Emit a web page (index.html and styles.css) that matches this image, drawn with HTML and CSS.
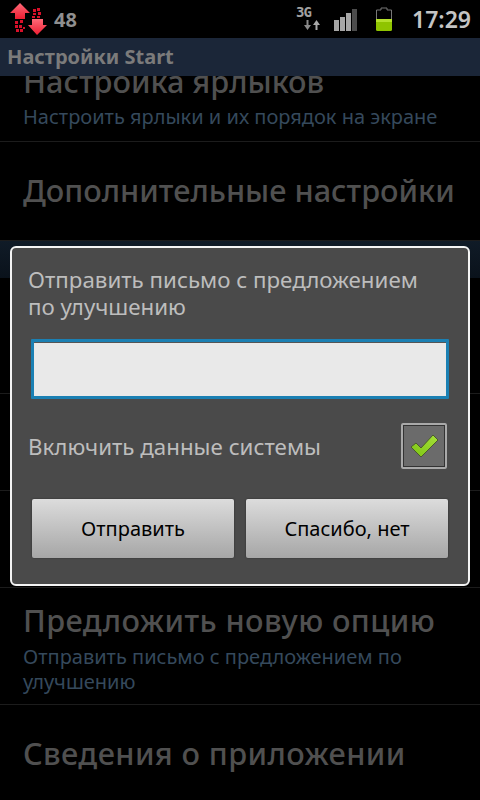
FILE: index.html
```html
<!DOCTYPE html>
<html>
  <head>
    <title>Настройки Start</title>
    <link rel="stylesheet" href="styles.css">
  </head>
  <body>
    <div id="statusBar">
      <svg class="transfer-icon" width="50" height="38" viewBox="0 0 50 38">
        <defs>
          <linearGradient id="arrowFill" x1="0" y1="0" x2="0" y2="1">
            <stop offset="0" stop-color="#ff6a78"/>
            <stop offset="1" stop-color="#ee1c30"/>
          </linearGradient>
        </defs>
        <path d="M20 3 L30 13 H25 V19 H15 V13 H10 Z" fill="url(#arrowFill)"/>
        <path d="M32 19 H43 V25 H47 L37 35 L28 25 H32 Z" fill="url(#arrowFill)"/>
        <path d="M15 21h3v3h-3z M20 20h3v3h-3z M15 25h3v3h-3z M19 25h3v3h-3z M23 27h2v2h-2z M16 29h3v3h-3z M20 29h3v3h-3z" fill="#d8102a"/>
        <path d="M33 9h3v3h-3z M37 8h3v3h-3z M33 13h3v2h-3z M38 12h3v3h-3z M32 16h3v2h-3z M37 16h3v2h-3z" fill="#d8102a"/>
      </svg>
      <span class="notify-count">48</span>
      <div class="status-right">
        <div class="net-icon">
          <span class="net-label">3G</span>
          <svg class="net-arrows" width="18" height="10" viewBox="0 0 18 10">
            <path d="M1 5h2.500V0h2v5H8L4.500 10Z" fill="#8a8a8a"/>
            <path d="M10 5h2.500v5h2V5H17L13.500 0Z" fill="#a8a8a8"/>
          </svg>
        </div>
        <svg class="signal-icon" width="24" height="22" viewBox="0 0 24 22">
          <rect x="0" y="11" width="5" height="11" fill="#a6a6a6"/>
          <rect x="6" y="8" width="5" height="14" fill="#a6a6a6"/>
          <rect x="12" y="4" width="5" height="18" fill="#a6a6a6"/>
          <rect x="18" y="0" width="5" height="22" fill="#4c4c4c"/>
        </svg>
        <svg class="battery-icon" width="18" height="25" viewBox="0 0 18 25">
          <path d="M6 1h6v2h4.500v12h-15v-12h4.500z" fill="none" stroke="#777" stroke-width="1"/>
          <rect x="1" y="12" width="16" height="12" rx="1.500" fill="#8fc400"/>
          <rect x="1" y="12" width="16" height="3" fill="#b4e02c"/>
        </svg>
        <span class="clock">17:29</span>
      </div>
    </div>

    <div id="titleBar">Настройки Start</div>

    <div id="prefList">
      <div class="pref first">
        <div class="pref-title">Настройка ярлыков</div>
        <div class="pref-summary">Настроить ярлыки и их порядок на экране</div>
      </div>
      <div class="pref single">
        <div class="pref-title">Дополнительные настройки</div>
      </div>
      <div class="category"></div>
      <div class="pref blank row-tall"></div>
      <div class="pref blank row-mid"></div>
      <div class="pref blank row-mid"></div>
      <div class="pref two-line">
        <div class="pref-title loose">Предложить новую опцию</div>
        <div class="pref-summary">Отправить письмо с предложением по улучшению</div>
      </div>
      <div class="pref single">
        <div class="pref-title loose">Сведения о приложении</div>
      </div>
    </div>

    <div id="dialog">
      <div class="dialog-message">Отправить письмо с предложением по улучшению</div>
      <input class="dialog-input" type="text">
      <div class="dialog-option">
        <span>Включить данные системы</span>
        <div class="checkbox">
          <svg width="32" height="28" viewBox="0 0 32 28">
            <defs>
              <linearGradient id="checkFill" x1="1" y1="0" x2="0" y2="1">
                <stop offset="0" stop-color="#a6e03a"/>
                <stop offset="1" stop-color="#7cc412"/>
              </linearGradient>
            </defs>
            <path d="M3 15 L8 11 L13 16 L25 3 L30 8 L13 25 Z" fill="url(#checkFill)" stroke="#4a5a2c" stroke-width="1"/>
          </svg>
        </div>
      </div>
      <div class="dialog-buttons">
        <button class="dialog-btn">Отправить</button>
        <button class="dialog-btn">Спасибо, нет</button>
      </div>
    </div>
  </body>
</html>
```

FILE: styles.css
```css
body {
  margin: 0;
  width: 480px;
  height: 800px;
  overflow: hidden;
  display: flex;
  flex-direction: column;
  background: #000;
  font-family: "Noto Sans", "Open Sans", sans-serif;
}

#statusBar {
  height: 38px;
  flex: none;
  display: flex;
  align-items: center;
  background: #000;
  color: #a8a8a8;
}

.transfer-icon {
  flex: none;
}

.notify-count {
  margin-left: 4px;
  font-size: 20px;
  font-weight: 700;
  color: #8f8f8f;
}

.status-right {
  margin-left: auto;
  display: flex;
  align-items: center;
}

.net-icon {
  display: flex;
  flex-direction: column;
  align-items: flex-start;
  width: 26px;
  margin-right: 12px;
  margin-top: -2px;
}

.net-label {
  font-family: "DejaVu Sans Mono", monospace;
  font-size: 14px;
  line-height: 12px;
  font-weight: 700;
  letter-spacing: -1px;
  color: #a0a0a0;
}

.net-arrows {
  margin: 2px 0 0 7px;
}

.signal-icon {
  margin-right: 17px;
  margin-top: 1px;
}

.battery-icon {
  margin-right: 19px;
  margin-top: 1px;
}

.clock {
  margin-right: 9px;
  font-size: 23px;
  font-weight: 600;
  color: #c4c4c4;
}

#titleBar {
  height: 38px;
  flex: none;
  box-sizing: border-box;
  padding: 0 0 2px 7px;
  display: flex;
  align-items: center;
  position: relative;
  z-index: 1;
  background: #1b2638;
  color: #7b7b7b;
  font-size: 20px;
  font-weight: 700;
}

#prefList {
  flex: 1;
  overflow: hidden;
}

.pref {
  box-sizing: border-box;
  border-bottom: 1px solid #1c1c1c;
  padding: 0 23px;
}

.pref.first {
  height: 66px;
  display: flex;
  flex-direction: column;
  justify-content: flex-end;
  padding-bottom: 12px;
}

.pref.single {
  height: 99px;
  display: flex;
  align-items: center;
  padding-bottom: 2px;
}

.pref.two-line {
  height: 117px;
  padding-top: 12px;
}

.pref.blank.row-tall {
  height: 116px;
}

.pref.blank.row-mid {
  height: 97px;
}

.pref-title {
  font-size: 30.7px;
  line-height: 40px;
  font-weight: 500;
  color: #505050;
  white-space: nowrap;
}

.pref-title.loose {
  letter-spacing: 0.4px;
}

.pref-summary {
  margin-top: 4px;
  font-size: 20px;
  line-height: 25px;
  color: #35495c;
}

.pref.first .pref-summary {
  margin-top: 3px;
}

.category {
  height: 37px;
  background: linear-gradient(#101b27, #0a121b);
}

#dialog {
  position: absolute;
  left: 10px;
  top: 246px;
  width: 460px;
  height: 340px;
  box-sizing: border-box;
  padding: 18px 20px 0 16px;
  background: #4a4a4a;
  border: 2px solid #f4f4f4;
  border-radius: 6px;
  color: #bdbdbd;
}

.dialog-message {
  max-width: 400px;
  font-size: 22.3px;
  line-height: 27px;
}

.dialog-input {
  display: block;
  box-sizing: border-box;
  width: 418px;
  height: 60px;
  margin: 19px 0 0 3px;
  background: #e9e9e9;
  border: 3px solid #1b80b3;
  box-shadow: inset 0 1px 0 #555;
  border-radius: 1px;
  outline: none;
}

.dialog-option {
  display: flex;
  align-items: center;
  justify-content: space-between;
  margin-top: 24px;
  font-size: 22.3px;
}

.checkbox {
  width: 46px;
  height: 46px;
  box-sizing: border-box;
  display: flex;
  align-items: center;
  justify-content: center;
  background: #6b6b6b;
  border: 3px solid #333;
  outline: 2px solid #a9a9a9;
  outline-offset: -2px;
  border-radius: 2px;
  margin-right: 1px;
}

.dialog-buttons {
  display: flex;
  gap: 12px;
  margin: 30px 0 0 4px;
}

.dialog-btn {
  width: 202px;
  height: 59px;
  padding: 0;
  border: none;
  border-radius: 2px;
  background: linear-gradient(#dcdcdc, #a6a6a6);
  box-shadow: 0 0 2px #2a2a2a;
  color: #000;
  font-family: inherit;
  font-size: 20px;
}
```
